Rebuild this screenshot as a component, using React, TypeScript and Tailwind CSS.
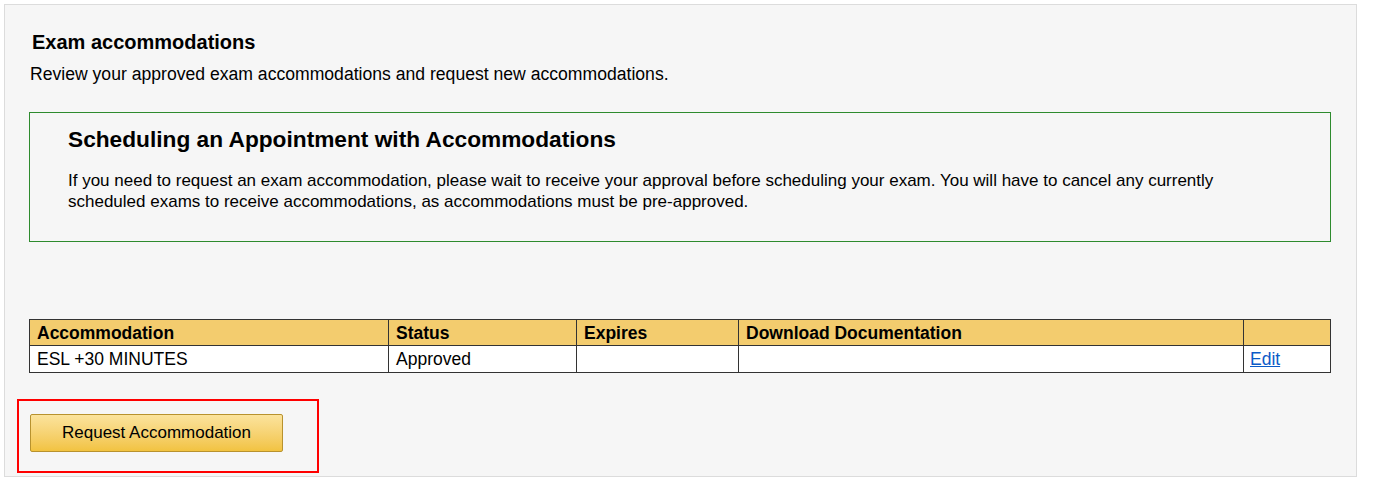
export default function App() {
  const font = { fontFamily: '"Liberation Sans", Arial, Helvetica, sans-serif' };

  return (
    <div className="h-[481px] w-[1400px] bg-white pl-[4px] pt-[4px] text-black" style={font}>
      <div className="flex h-[473px] w-[1353px] flex-col border border-[#dcdcdc] bg-[#f6f6f6] pl-[24px] pr-[25px]">
        <h2 className="mt-[26px] pl-[3px] text-[20px] font-bold leading-[22px]">Exam accommodations</h2>
        <p className="mt-[11px] pl-[1px] text-[17.6px] leading-[21px]">
          Review your approved exam accommodations and request new accommodations.
        </p>

        <div className="mt-[27px] h-[130px] border border-[#2e8b2e] pl-[38px] pr-[60px]">
          <h3 className="mt-[13px] text-[22.7px] font-bold leading-[27px]">
            Scheduling an Appointment with Accommodations
          </h3>
          <p className="mt-[17px] text-[17px] leading-[21px]">
            If you need to request an exam accommodation, please wait to receive your approval before scheduling your exam. You will have to cancel any currently scheduled exams to receive accommodations, as accommodations must be pre-approved.
          </p>
        </div>

        <table className="mt-[77px] w-full border-collapse border border-[#333] text-[17.5px]">
          <thead>
            <tr className="h-[26px] bg-[#f3cc6e] text-left">
              <th className="w-[359px] border border-[#333] px-[7px] py-0 font-bold leading-[20px]">Accommodation</th>
              <th className="w-[188px] border border-[#333] px-[7px] py-0 font-bold leading-[20px]">Status</th>
              <th className="w-[162px] border border-[#333] px-[7px] py-0 font-bold leading-[20px]">Expires</th>
              <th className="w-[505px] border border-[#333] px-[7px] py-0 font-bold leading-[20px]">Download Documentation</th>
              <th className="border border-[#333] px-[7px] py-0"></th>
            </tr>
          </thead>
          <tbody>
            <tr className="h-[27px] bg-white leading-[20px]">
              <td className="border border-[#333] px-[7px] py-0">ESL +30 MINUTES</td>
              <td className="border border-[#333] px-[7px] py-0">Approved</td>
              <td className="border border-[#333] px-[7px] py-0"></td>
              <td className="border border-[#333] px-[7px] py-0"></td>
              <td className="border border-[#333] px-[6px] py-0">
                <a href="#" className="text-[#0b5bc7] underline">Edit</a>
              </td>
            </tr>
          </tbody>
        </table>

        <div className="-ml-[12px] mt-[26px] h-[74px] w-[302px] border-2 border-[#ff0000] pl-[11px] pt-[13px]">
          <button className="h-[38px] w-[253px] rounded-[2px] border border-[#b8922e] bg-gradient-to-b from-[#fbe39c] to-[#f2c340] text-[17px] text-black">
            Request Accommodation
          </button>
        </div>
      </div>
    </div>
  );
}
